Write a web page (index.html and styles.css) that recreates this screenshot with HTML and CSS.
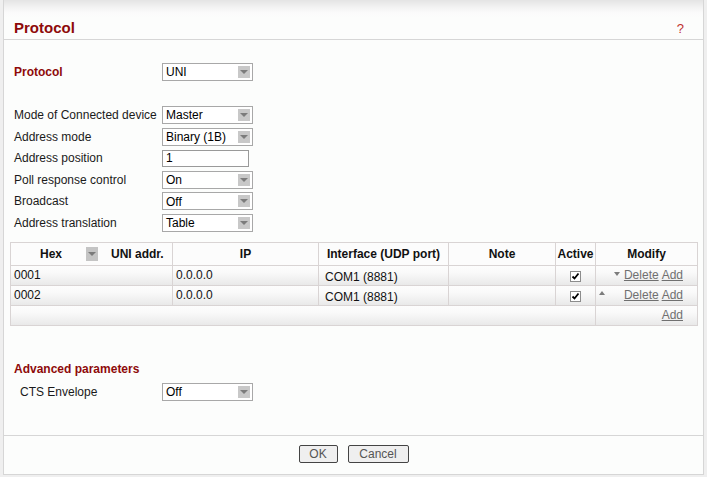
FILE: index.html
```html
<!DOCTYPE html>
<html>
<head>
<meta charset="utf-8">
<link rel="stylesheet" href="styles.css">
</head>
<body>
<div class="frame">
  <div class="hdr">
    <span class="title">Protocol</span>
    <span class="help">?</span>
  </div>
  <div class="content">
    <div class="form">
      <div class="row"><div class="lbl strong">Protocol</div><div class="sel"><span>UNI</span><i class="arr"></i></div></div>
      <div class="row"></div>
      <div class="row"><div class="lbl">Mode of Connected device</div><div class="sel"><span>Master</span><i class="arr"></i></div></div>
      <div class="row"><div class="lbl">Address mode</div><div class="sel"><span>Binary (1B)</span><i class="arr"></i></div></div>
      <div class="row"><div class="lbl">Address position</div><div class="inp">1</div></div>
      <div class="row"><div class="lbl">Poll response control</div><div class="sel"><span>On</span><i class="arr"></i></div></div>
      <div class="row"><div class="lbl">Broadcast</div><div class="sel"><span>Off</span><i class="arr"></i></div></div>
      <div class="row"><div class="lbl">Address translation</div><div class="sel"><span>Table</span><i class="arr"></i></div></div>
    </div>

    <table class="grid">
      <colgroup>
        <col class="c1"><col class="c2"><col class="c3"><col class="c4"><col class="c5"><col class="c6">
      </colgroup>
      <thead>
        <tr>
          <th class="hexcell"><div class="hexhead"><span class="hexlbl">Hex</span><i class="minisel"></i><span class="unilbl">UNI addr.</span></div></th>
          <th>IP</th>
          <th>Interface (UDP port)</th>
          <th>Note</th>
          <th>Active</th>
          <th>Modify</th>
        </tr>
      </thead>
      <tbody>
        <tr>
          <td>0001</td>
          <td>0.0.0.0</td>
          <td class="iface">COM1 (8881)</td>
          <td></td>
          <td class="ctr"><span class="cb"><svg width="9" height="9" viewBox="0 0 9 9"><path d="M1.5 4.5 L3.5 6.5 L7.5 1.5" fill="none" stroke="#000" stroke-width="1.8"/></svg></span></td>
          <td class="mod"><div class="modwrap"><span class="slot"></span><span class="slot down"></span><a href="#">Delete</a> <a href="#">Add</a></div></td>
        </tr>
        <tr>
          <td>0002</td>
          <td>0.0.0.0</td>
          <td class="iface">COM1 (8881)</td>
          <td></td>
          <td class="ctr"><span class="cb"><svg width="9" height="9" viewBox="0 0 9 9"><path d="M1.5 4.5 L3.5 6.5 L7.5 1.5" fill="none" stroke="#000" stroke-width="1.8"/></svg></span></td>
          <td class="mod"><div class="modwrap"><span class="slot up"></span><span class="slot"></span><a href="#">Delete</a> <a href="#">Add</a></div></td>
        </tr>
        <tr>
          <td colspan="5"></td>
          <td class="mod"><div class="modwrap"><a href="#">Add</a></div></td>
        </tr>
      </tbody>
    </table>

    <div class="adv">
      <div class="sect">Advanced parameters</div>
      <div class="row indent"><div class="lbl">CTS Envelope</div><div class="sel"><span>Off</span><i class="arr"></i></div></div>
    </div>
  </div>
  <div class="foot">
    <button class="btn ok">OK</button>
    <button class="btn cancel">Cancel</button>
  </div>
</div>
</body>
</html>
```
FILE: styles.css
```css
html, body {
  margin: 0;
  padding: 0;
}
body {
  background: #efefef;
  font-family: "Liberation Sans", Arial, sans-serif;
  font-size: 12px;
  color: #1a1a1a;
}
.frame {
  margin: 0 3px;
  height: 475px;
  box-sizing: border-box;
  border-left: 1px solid #d6d6d6;
  border-right: 1px solid #d6d6d6;
  border-bottom: 1px solid #d6d6d6;
  background: #fcfdfc;
  display: flex;
  flex-direction: column;
}
.hdr {
  height: 40px;
  box-sizing: border-box;
  border-bottom: 1px solid #d6d6d6;
  background: linear-gradient(to bottom, #e4e4e4 0px, #f2f2f2 7px, #fbfbfb 13px, #fcfdfc 18px);
  display: flex;
  justify-content: space-between;
  padding: 19px 19px 0 10px;
}
.title {
  font-size: 15px;
  font-weight: bold;
  color: #8e0a0a;
  line-height: 18px;
}
.help {
  font-size: 13px;
  color: #c03030;
  line-height: 18px;
  padding-top: 1px;
}
.content {
  flex: 1;
}
.form {
  padding: 21px 0 0 10px;
}
.row {
  height: 21.6px;
  display: flex;
  align-items: center;
}
.lbl {
  width: 148px;
  flex: none;
  color: #1a1a1a;
}
.strong {
  font-weight: bold;
  color: #8e0a0a;
}
.sel {
  width: 91px;
  height: 18px;
  box-sizing: border-box;
  border: 1px solid #a8a8a8;
  background: #fff;
  display: flex;
  align-items: center;
  justify-content: space-between;
  padding-left: 3px;
  padding-top: 1px;
  color: #000;
}
.arr {
  width: 12px;
  height: 12px;
  margin-right: 2px;
  margin-top: -1px;
  background: #c8c8c8;
  display: flex;
  align-items: center;
  justify-content: center;
}
.arr::after {
  content: "";
  border-left: 4px solid transparent;
  border-right: 4px solid transparent;
  border-top: 4px solid #7c7c7c;
}
.inp {
  width: 87px;
  height: 17px;
  box-sizing: border-box;
  border: 1px solid #9a9a9a;
  background: #fff;
  padding-left: 3px;
  line-height: 15px;
  color: #000;
}
.grid {
  margin: 8px 0 0 6px;
  width: 688px;
  table-layout: fixed;
  border-collapse: collapse;
  border: 1px solid #d9d4d4;
}
.c1 { width: 162px; }
.c2 { width: 146px; }
.c3 { width: 130px; }
.c4 { width: 107px; }
.c5 { width: 40px; }
.c6 { width: 102px; }
.grid th, .grid td {
  border: 1px solid #d9d4d4;
  padding: 0 0 0 3px;
  font-size: 12px;
  line-height: 14px;
  color: #111;
}
.grid th {
  height: 22px;
  font-weight: bold;
  text-align: center;
  padding: 0;
  background: #fcfcfc;
}
.grid td {
  height: 19px;
  text-align: left;
}
.grid tbody tr {
  background: linear-gradient(to bottom, #fdfdfd 0%, #f9f9f9 40%, #e9e9e9 100%);
}
.hexcell {
  text-align: left;
}
.hexhead {
  display: flex;
  align-items: center;
  padding-left: 29px;
}
.minisel {
  width: 12px;
  height: 14px;
  margin-left: 24px;
  background: #c4c4c4;
  display: flex;
  align-items: center;
  justify-content: center;
}
.minisel::after {
  content: "";
  border-left: 4px solid transparent;
  border-right: 4px solid transparent;
  border-top: 4px solid #7a7a7a;
}
.unilbl {
  margin-left: 13px;
}
.grid td.iface {
  padding-left: 6px;
  padding-top: 4px;
  height: 15px;
}
.grid td.ctr {
  text-align: center;
  padding: 0;
}
.cb {
  display: inline-flex;
  width: 11px;
  height: 11px;
  box-sizing: border-box;
  border: 1px solid #8c8c8c;
  background: #fff;
  align-items: center;
  justify-content: center;
  vertical-align: middle;
}
.grid td.mod {
  padding: 0 14px 0 2px;
}
.modwrap {
  display: flex;
  align-items: center;
  justify-content: flex-end;
}
.modwrap a {
  color: #707070;
  text-decoration: underline;
  margin-left: 3px;
}
.slot {
  width: 8px;
  height: 8px;
  display: flex;
  align-items: center;
  justify-content: center;
}
.slot + .slot {
  margin-left: 5px;
}
.slot:first-child {
  margin-right: auto;
}
.slot.down::after {
  content: "";
  border-left: 3.5px solid transparent;
  border-right: 3.5px solid transparent;
  border-top: 4px solid #7c7c7c;
  margin-top: -3px;
}
.slot.up::after {
  content: "";
  border-left: 3.5px solid transparent;
  border-right: 3.5px solid transparent;
  border-bottom: 4px solid #7c7c7c;
  margin-top: -4px;
}
.adv {
  padding: 35px 0 0 10px;
}
.sect {
  font-weight: bold;
  color: #8e0a0a;
  line-height: 16px;
  margin-bottom: 4px;
}
.indent .lbl {
  padding-left: 6px;
  width: 142px;
}
.foot {
  height: 39px;
  box-sizing: border-box;
  border-top: 1px solid #d6d6d6;
  display: flex;
  justify-content: center;
  align-items: flex-start;
  padding-top: 9px;
  gap: 10px;
}
.btn {
  height: 18px;
  box-sizing: border-box;
  border: 1px solid #444;
  border-radius: 2px;
  background: #efefef;
  font-family: "Liberation Sans", Arial, sans-serif;
  font-size: 12px;
  color: #555;
  padding: 0;
  line-height: 16px;
}
.ok { width: 39px; }
.cancel { width: 61px; }
```
